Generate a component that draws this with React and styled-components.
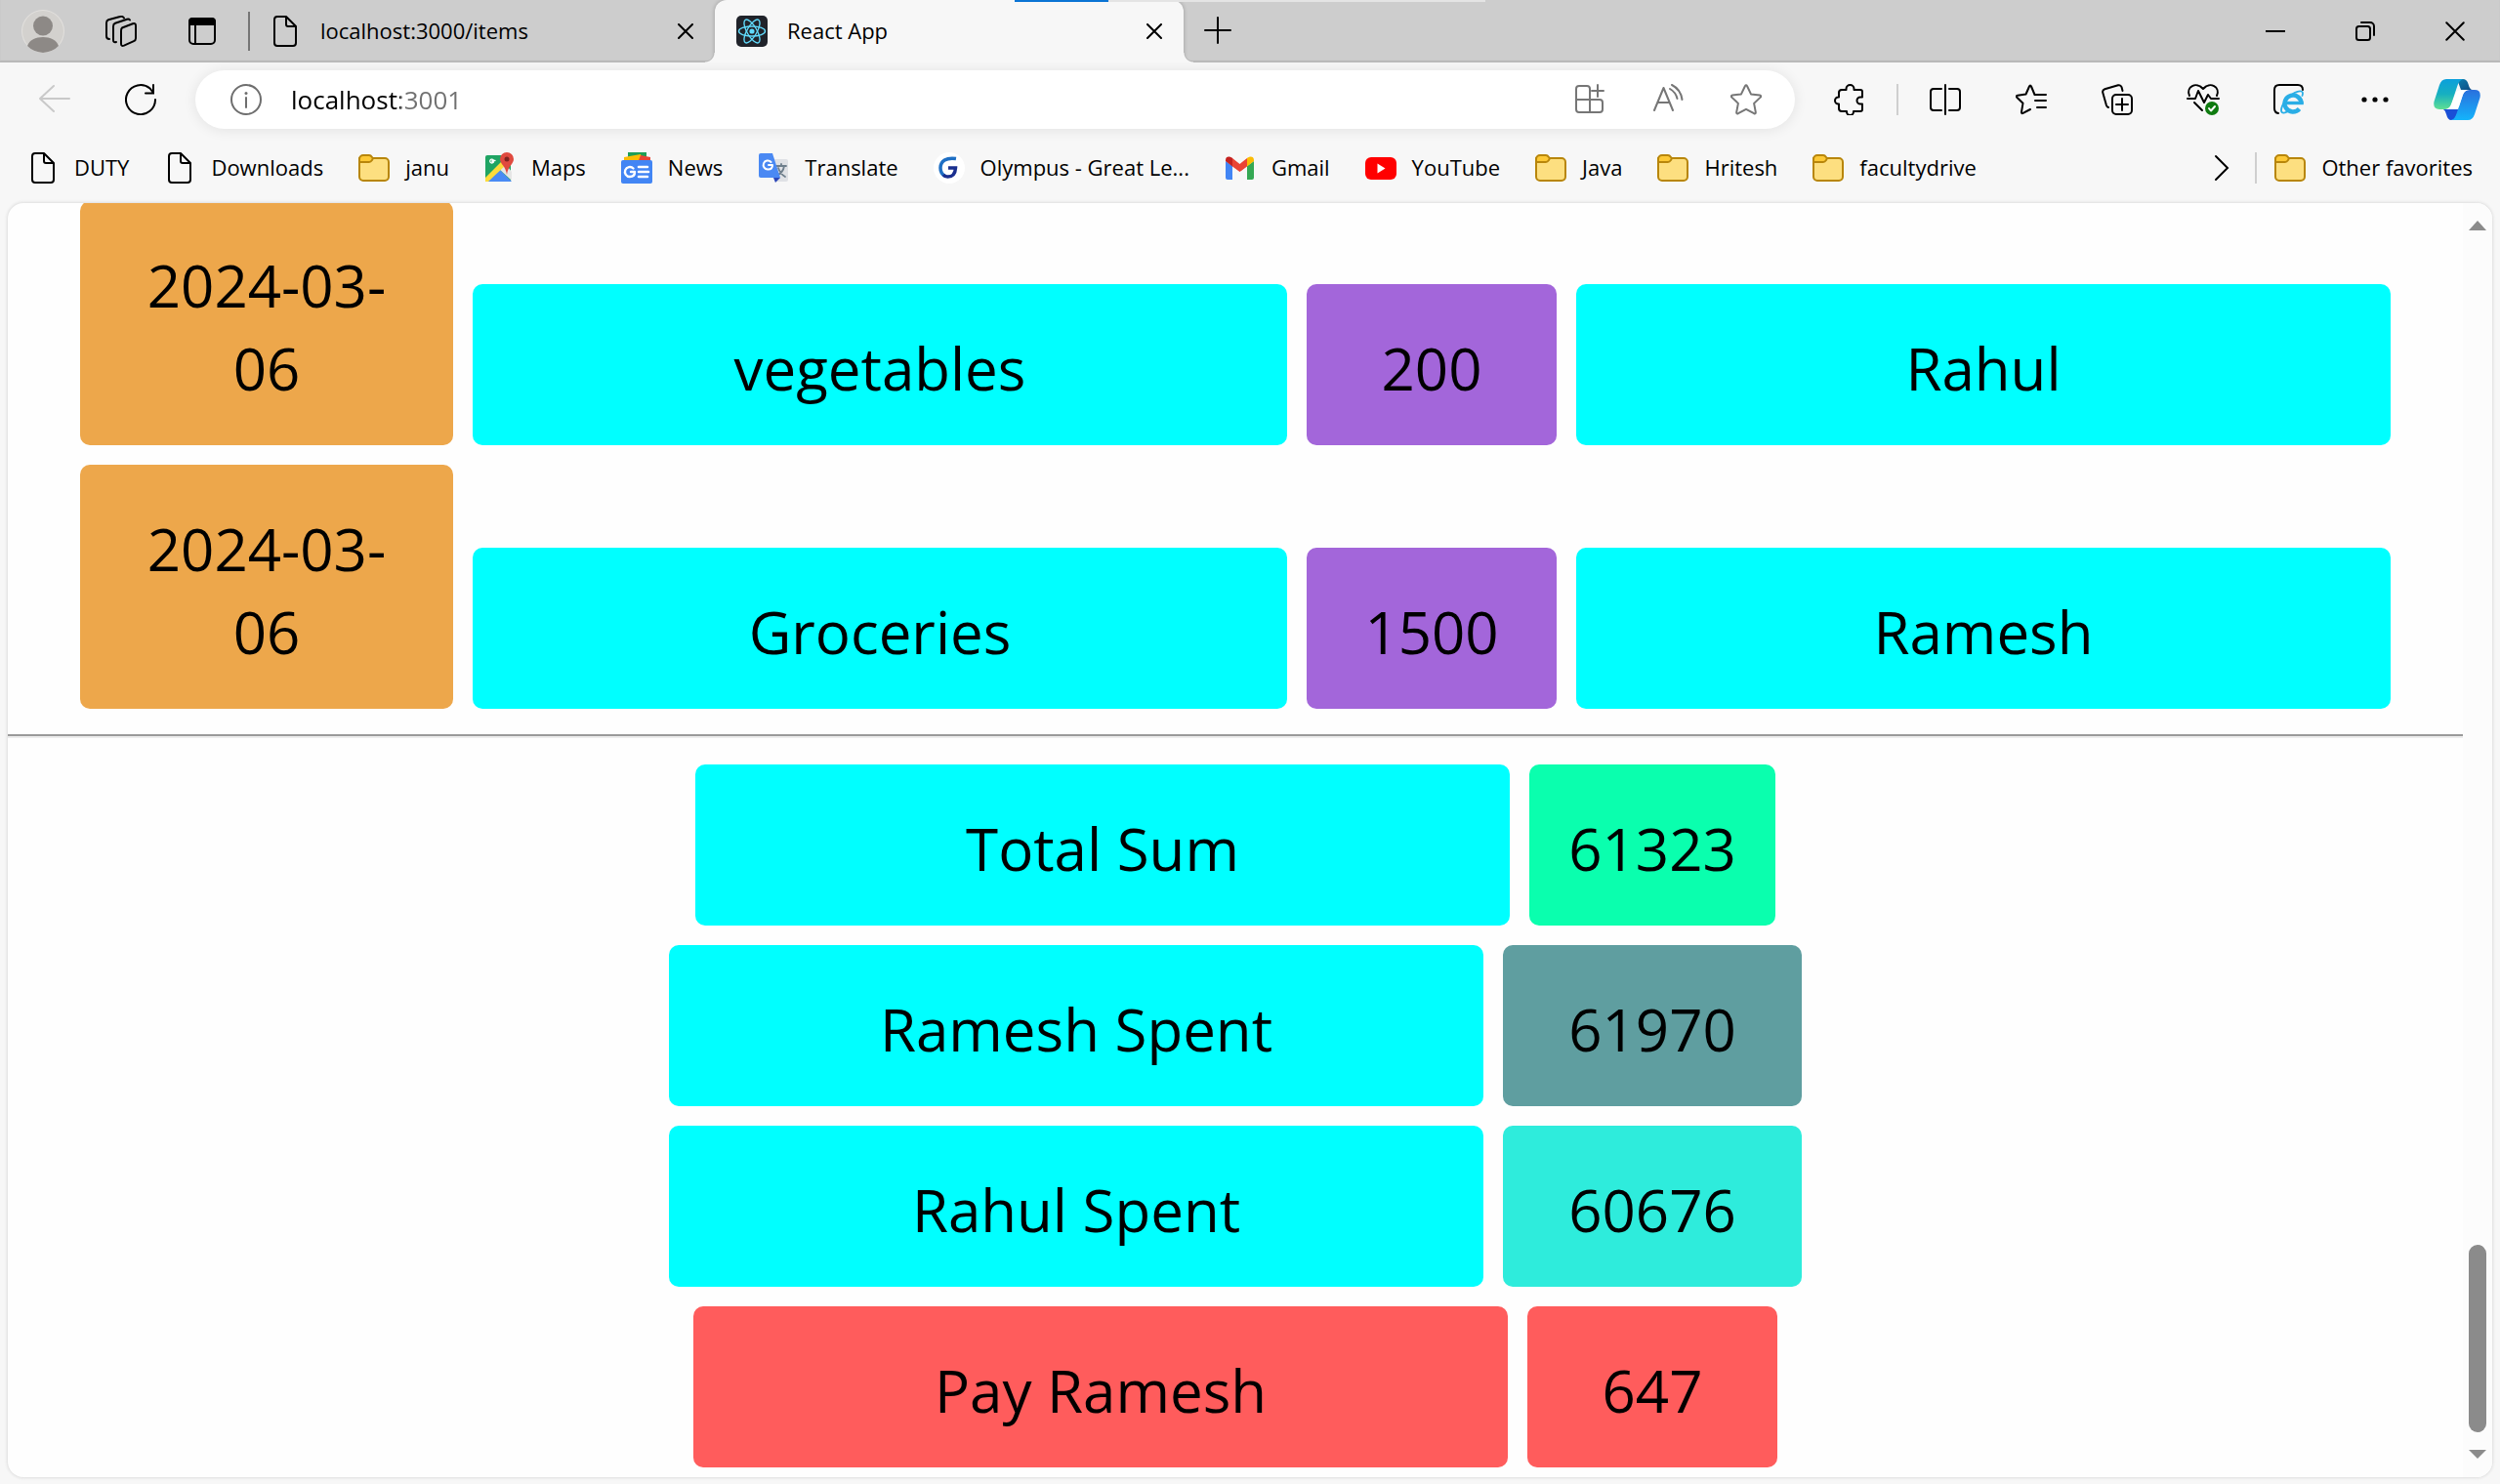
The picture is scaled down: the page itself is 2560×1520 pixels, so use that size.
import React from "react";
import styled, { createGlobalStyle } from "styled-components";

const Global = createGlobalStyle`
  * { box-sizing: border-box; }
  body { margin: 0; background: #f7f7f7; font-family: "Open Sans", "Noto Sans", sans-serif; color: #000; }
  button { border: 0; padding: 0; background: none; color: inherit; font: inherit; }
  svg { display: block; flex: none; }
`;

/* ---------- window frame ---------- */
const Browser = styled.div`
  display: flex;
  flex-direction: column;
  height: 100vh;
  min-height: 800px;
`;

const TabStrip = styled.header`
  display: flex;
  height: 64px;
  flex: none;
  background: #cdcdcd;
  box-shadow: inset 0 -2px 1px #b9b9b9;
  position: relative;
`;

const IconButton = styled.button`
  display: flex;
  align-items: center;
  justify-content: center;
  flex: none;
  width: ${(p) => p.$width || 88}px;
  height: ${(p) => p.$height || 60}px;
  color: ${(p) => p.$color || "#000"};
`;

const StripDivider = styled.span`
  align-self: center;
  width: 2px;
  height: 40px;
  background: #767676;
`;

const Tab = styled.div`
  display: flex;
  align-items: center;
  gap: 20px;
  flex: 0 1 ${(p) => (p.$active ? 480 : 476)}px;
  padding: 0 14px 0 ${(p) => (p.$active ? 22 : 20)}px;
  position: relative;
  background: ${(p) => (p.$active ? "#f7f7f7" : "transparent")};
  border-radius: 12px 12px 0 0;
  ${(p) =>
    p.$active &&
    `
    box-shadow: 0 0 4px rgba(0, 0, 0, 0.25);
    clip-path: inset(0 -12px 0 -12px);
    &::before, &::after {
      content: "";
      position: absolute;
      bottom: 0;
      width: 10px;
      height: 10px;
    }
    &::before { right: 100%; background: radial-gradient(circle at 0 0, transparent 8px, #b9b9b9 9px, #f7f7f7 10px); }
    &::after { left: 100%; background: radial-gradient(circle at 100% 0, transparent 8px, #b9b9b9 9px, #f7f7f7 10px); }
  `}
`;

const TabTitle = styled.span`
  flex: 1;
  padding-bottom: 2px;
  font-size: 22px;
  line-height: 32px;
  white-space: nowrap;
`;

const Spacer = styled.div`
  flex: 1;
`;

const LoadTrack = styled.div`
  position: absolute;
  top: 0;
  left: 1039px;
  width: 482px;
  height: 2px;
  background: linear-gradient(90deg, #0a74d4 96px, #e4e4e4 96px);
`;

/* ---------- toolbar ---------- */
const Toolbar = styled.div`
  display: flex;
  align-items: center;
  flex: none;
  padding: 8px 4px 8px 12px;
`;

const AddressBar = styled.form`
  display: flex;
  align-items: center;
  flex: 1;
  height: 60px;
  margin: 0 12px;
  padding: 0 10px 0 36px;
  border-radius: 30px;
  background: #fff;
  box-shadow: 0 1px 14px rgba(0, 0, 0, 0.09);
`;

const AddressInput = styled.input`
  flex: 1;
  min-width: 0;
  margin-left: 28px;
  padding: 0 2px;
  border: 0;
  outline: 0;
  font: 26px/40px "Open Sans", "Noto Sans", sans-serif;
  color: transparent;
  background: linear-gradient(90deg, #000 114px, #707070 114px);
  -webkit-background-clip: text;
  background-clip: text;
`;

const Divider = styled.span`
  width: 2px;
  height: 32px;
  margin: 0 ${(p) => p.$gap}px;
  background: #cfcfcf;
`;

/* ---------- favorites ---------- */
const Favorites = styled.nav`
  display: flex;
  align-items: center;
  gap: 36px;
  height: 64px;
  flex: none;
  margin-bottom: 4px;
  padding: 0 28px;
`;

const Favorite = styled.a`
  display: flex;
  align-items: center;
  gap: 16px;
  font-size: 22px;
  line-height: 32px;
  color: #000;
  text-decoration: none;
  white-space: nowrap;
`;

const FavoriteName = styled.span`
  padding-bottom: 2px;
`;

const FavoritesEnd = styled.div`
  display: flex;
  align-items: center;
  margin-left: auto;
`;

/* ---------- page view ---------- */
const View = styled.main`
  display: flex;
  flex: 1;
  min-height: 0;
  margin: 0 8px 7px;
  border-radius: 16px;
  background: #fefefe;
  box-shadow: 0 0 3px 1px #dedede;
  overflow: hidden;
`;

const Page = styled.div`
  display: flex;
  flex-direction: column;
  justify-content: flex-end;
  flex: 1;
  min-width: 0;
  padding-bottom: 10px;
`;

const Rows = styled.ul`
  display: flex;
  flex-direction: column;
  gap: 20px;
  margin: 0;
  padding: 0;
  list-style: none;
`;

const Row = styled.li`
  display: flex;
  justify-content: center;
  align-items: flex-end;
  gap: 20px;
`;

const Tile = styled.div`
  flex: 0 1 ${(p) => p.$width}px;
  padding: 44px 38px 36px;
  border-radius: 10px;
  background: ${(p) => p.$tone};
  font-size: 60px;
  line-height: 85px;
  text-align: center;
`;

const Rule = styled.hr`
  flex: none;
  width: 100%;
  margin: 26px 0 27px;
  border: 0;
  border-top: 2px solid #9a9a9a;
  border-bottom: 2px solid #ededed;
`;

const ScrollBar = styled.div`
  display: flex;
  flex-direction: column;
  align-items: center;
  gap: 18px;
  flex: none;
  width: 30px;
  padding: 18px 0;
  background: #fcfcfc;
`;

const Track = styled.div`
  display: flex;
  align-items: flex-end;
  flex: 1;
`;

const Thumb = styled.div`
  width: 18px;
  height: 192px;
  border-radius: 9px;
  background: #8b8b8b;
`;

/* ---------- icons ---------- */
const Ico = ({ size = 32, sw = 2, children, vb = "0 0 32 32", ...rest }) => (
  <svg width={size} height={size} viewBox={vb} fill="none" stroke="currentColor" strokeWidth={sw} strokeLinecap="round" strokeLinejoin="round" aria-hidden="true" {...rest}>
    {children}
  </svg>
);

const DocIcon = () => (
  <Ico>
    <path d="M8 1h9l10 10v17a3 3 0 0 1-3 3H8a3 3 0 0 1-3-3V4a3 3 0 0 1 3-3zM17 1v8a2 2 0 0 0 2 2h8" />
  </Ico>
);

const FolderIcon = () => (
  <Ico stroke="#b8860b">
    <path d="M1 6h26a4 4 0 0 1 4 4v15a4 4 0 0 1-4 4H5a4 4 0 0 1-4-4z" fill="#fddf80" />
    <path d="M5 3h6c1.500 0 2 .5 3 2s1 1.500 0 3-1.500 2-3 2H1V7a4 4 0 0 1 4-4z" fill="#fdc936" />
  </Ico>
);

const AvatarIcon = () => (
  <Ico size={44} vb="0 0 44 44" stroke="none">
    <circle cx="22" cy="22" r="22" fill="#e2e0dd" />
    <circle cx="22" cy="22" r="21" fill="#d3d1ce" />
    <circle cx="22" cy="16.500" r="10" fill="#8d8986" />
    <path d="M6 37c2-6 8.500-9 16-9s14 3 16 9a22 22 0 0 1-32 0z" fill="#8d8986" />
  </Ico>
);

const WorkspacesIcon = () => (
  <Ico>
    <path d="M17 12.500l11-4.200q3-1 3 2v13q0 2-2 2.800l-10 4.500q-3 1.200-3-1.800v-13q0-2.400 1-3.300z" />
    <path d="M11 27q-3 1-3-2V11q0-2.500 2-3.300l12-4q2-.6 3 .8" />
    <path d="M4 24q-3 0-3-3V7.500q0-2.500 2-3.300L15 1q2.500-.8 4 1.500" />
  </Ico>
);

const TabActionsIcon = () => (
  <Ico>
    <rect x="3" y="3" width="26" height="26" rx="4" />
    <path d="M9 9v19" />
    <path d="M2 10V6a4 4 0 0 1 4-4h20a4 4 0 0 1 4 4v4z" fill="currentColor" stroke="none" />
  </Ico>
);

const ReactIcon = () => (
  <Ico stroke="#61dafb" sw={1.4}>
    <rect width="32" height="32" rx="5" fill="#20232a" stroke="none" />
    <circle cx="16" cy="16" r="2.600" fill="#61dafb" stroke="none" />
    {[0, 60, 120].map((a) => (
      <ellipse key={a} cx="16" cy="16" rx="13.500" ry="5" transform={`rotate(${a} 16 16)`} />
    ))}
  </Ico>
);

const CrossIcon = ({ size = 16, sw = 2 }) => (
  <Ico size={size} vb="0 0 16 16" sw={sw}>
    <path d="M1 1l14 14M15 1L1 15" />
  </Ico>
);

const PlusIcon = () => (
  <Ico size={28} vb="0 0 28 28" sw={2}>
    <path d="M14 1v26M1 14h26" />
  </Ico>
);

const MinimizeIcon = () => (
  <Ico size={20} vb="0 0 20 20" strokeLinecap="butt">
    <path d="M0 10h20" />
  </Ico>
);

const RestoreIcon = () => (
  <Ico size={20} vb="0 0 20 20">
    <rect x="1" y="5" width="14" height="14" rx="2.500" />
    <path d="M6 1h9a4 4 0 0 1 4 4v9" />
  </Ico>
);

const BackIcon = () => (
  <Ico>
    <path d="M1 15h30M15 2L1 15l14 13" />
  </Ico>
);

const RefreshIcon = () => (
  <Ico strokeLinejoin="miter">
    <path d="M31 16A15 15 0 1 1 25.500 4.500L29 9M29 1v8.500h-8" />
  </Ico>
);

const InfoIcon = () => (
  <Ico stroke="#6e6e6e">
    <circle cx="16" cy="16" r="15" />
    <path d="M16 14v10" />
    <circle cx="16" cy="9.500" r="1.500" fill="#6e6e6e" stroke="none" />
  </Ico>
);

const AppsIcon = () => (
  <Ico>
    <path d="M16 16V5a3 3 0 0 0-3-3H5a3 3 0 0 0-3 3v21a3 3 0 0 0 3 3h21a3 3 0 0 0 3-3v-7a3 3 0 0 0-3-3H2M16 16v13M24 1v12M18 7h12" />
  </Ico>
);

const ReadAloudIcon = () => (
  <Ico>
    <path d="M2 27L11.500 4 21 27M5.500 19h12M18 5q6 3.500 7.500 10M20 1q9 4.500 10.500 15" />
  </Ico>
);

const StarIcon = () => (
  <Ico>
    <path d="M14.900 2.200q1.100-1.800 2.200 0l3.900 8.200 9 1.200q2 .4.700 2l-6.600 6.300 1.700 9q.2 2-1.700 1.300L16 25.900l-8.100 4.300q-1.900.7-1.700-1.300l1.700-9-6.600-6.300q-1.300-1.600.7-2l9-1.200z" />
  </Ico>
);

const PuzzleIcon = () => (
  <Ico>
    <path d="M5 9q0-3 3-3h4.500v-1a4 4 0 0 1 8 0v1H27q2 0 2 2v5.500h-2a3.500 3.500 0 0 0 0 7h2V26q0 2-2 2h-7v.5a3.500 3.500 0 0 1-7 0V28H8q-3 0-3-3v-4.500H4.500a3.500 3.500 0 0 1 0-7H5z" />
  </Ico>
);

const SplitIcon = () => (
  <Ico>
    <path d="M16 1v30M12 5H4a3 3 0 0 0-3 3v16a3 3 0 0 0 3 3h8M20 5h8a3 3 0 0 1 3 3v16a3 3 0 0 1-3 3h-8" />
  </Ico>
);

const FavListIcon = () => (
  <Ico>
    <path d="M21 11h-1.500L16 2.500q-1-2-2 0l-3.500 8-8.500 1.200q-2 .4-.7 2l6.200 6-1.500 9q-.2 2 1.600 1.200L15 26M20 11h11M20 17h11M22 24h9" />
  </Ico>
);

const CollectionsIcon = () => (
  <Ico>
    <rect x="11" y="11" width="20" height="20" rx="4" />
    <path d="M21 15v12M15 21h12M7 24q-1.500-.5-2-2L1.300 9q-.8-2.800 2-3.800L17 1.300q2.500-.6 3.500 1.800L21.500 7" />
  </Ico>
);

const HeartIcon = () => (
  <Ico size={36} vb="0 0 36 36">
    <path d="M4 14C0 5 11-1 18 7c7-8 18-2 14 7M2 17h8l3-8 6 12 4-8 3 4h8M9 21l8 8" />
    <circle cx="27" cy="27" r="7" fill="#0f7b10" stroke="none" />
    <path d="M24 27l2 2.500 4-4.500" stroke="#fff" />
  </Ico>
);

const IeIcon = () => (
  <Ico>
    <path d="M5 30q-4-.5-4-5V6q0-5 5-5h19q5 0 5 5" />
    <path d="M28.500 20.500a8.500 8.500 0 1 0-2 5" stroke="#2aaee6" strokeWidth="4.400" strokeLinecap="butt" />
    <path d="M13 19.500h17.700" stroke="#2aaee6" strokeWidth="3.400" strokeLinecap="butt" />
    <path d="M29.500 12c2-5-2-6-8-3C14 13 8 22 8 27c0 3 3 3.500 7 1" stroke="#2aaee6" strokeWidth="1.800" />
  </Ico>
);

const DotsIcon = () => (
  <Ico stroke="none">
    <circle cx="5" cy="16" r="2.600" fill="currentColor" />
    <circle cx="16" cy="16" r="2.600" fill="currentColor" />
    <circle cx="27" cy="16" r="2.600" fill="currentColor" />
  </Ico>
);

const CopilotIcon = () => (
  <Ico size={48} vb="0 0 48 48" stroke="none">
    <defs>
      <linearGradient id="cpA" x1="0" y1="0" x2="0" y2="1">
        <stop offset="0" stopColor="#0b9fdc" />
        <stop offset="0.5" stopColor="#17b0c0" />
        <stop offset="1" stopColor="#5fdf93" />
      </linearGradient>
      <linearGradient id="cpB" x1="0" y1="0" x2="0" y2="1">
        <stop offset="0" stopColor="#2a6fdd" />
        <stop offset="1" stopColor="#14b4fb" />
      </linearGradient>
      <linearGradient id="cpC" x1="0" y1="0" x2="1" y2="1">
        <stop offset="0" stopColor="#0d7fb0" />
        <stop offset="1" stopColor="#0f4a80" />
      </linearGradient>
    </defs>
    <path d="M24 3h6q4 0 5.500 5 1.500 6 4.500 6H28z" fill="url(#cpC)" />
    <path d="M10 34h16l-4 10q-1.500 1-4 1-3.500 0-5-6-1-4-3-5z" fill="#1a4fd6" />
    <path d="M13 3h17q-4 1-6 8l-6 18q-2 5-7 5H6q-7 0-5.500-8L6 9q2-6 7-6z" fill="url(#cpA)" />
    <path d="M35 45H18q4-1 6-8l6-18q2-5 7-5h5q7 0 5.500 8L42 39q-2 6-7 6z" fill="url(#cpB)" />
    <path d="M30 14h7q-5 0-7 5l-4 12q-1.500 3-4 3h-9q4-1 5-5l5-12q1-3 7-3z" fill="#fff" />
  </Ico>
);

const MapsIcon = () => (
  <Ico stroke="none">
    <rect x="1" y="3" width="26" height="27" rx="2" fill="#1fa463" />
    <path d="M2 30l13-13 13 13z" fill="#4a8af4" />
    <path d="M15 17l6-6 7 9v9z" fill="#e6e6e6" />
    <path d="M1 26L21 6l2 6L4 30H1z" fill="#fddc3b" />
    <path d="M11 8.500H8v1.500h1.500A2 2 0 1 1 9 7.500" stroke="#fff" strokeWidth="1.300" />
    <path d="M23 0a7 7 0 0 1 7 7c0 5-6 7-7 16-1-9-7-11-7-16a7 7 0 0 1 7-7z" fill="#e04a3f" />
    <circle cx="23" cy="7" r="2.500" fill="#7d2420" />
  </Ico>
);

const NewsIcon = () => (
  <Ico stroke="none">
    <path d="M7 0h19v6H7z" fill="#1e9e56" />
    <path d="M3 5l17-3 2 6H3z" fill="#fbbc04" />
    <path d="M20 3l10 2v3H18z" fill="#ea4335" />
    <rect y="8" width="32" height="24" rx="2" fill="#4285f4" />
    <path d="M10 20h4q0 5-5 5a5 5 0 1 1 3.500-8.500" stroke="#fff" strokeWidth="2.400" />
    <path d="M18 15h9M18 20h10M18 25h9" stroke="#fff" strokeWidth="2.600" />
  </Ico>
);

const TranslateIcon = () => (
  <Ico stroke="none">
    <path d="M13 7h16q2 0 2 2v19q0 2-2 2H19z" fill="#dfe1e5" />
    <path d="M18 14h11M24 12v2M27 14q-1 7-8 10M21 16q2 6 7 9" stroke="#6f7f8c" strokeWidth="1.800" />
    <path d="M16 26h7l-5 5z" fill="#2a46b8" />
    <path d="M3 1h12l8 25H3q-2 0-2-2V3q0-2 2-2z" fill="#4a89f3" />
    <path d="M11 13h4q0 4.500-4.500 4.500a4.500 4.500 0 1 1 3-7.500" stroke="#fff" strokeWidth="2" />
  </Ico>
);

const OlympusIcon = () => (
  <Ico stroke="none">
    <circle cx="16" cy="16" r="16" fill="#fff" />
    <path d="M23 6.500C13 5 7 9 7 16q0 6 5 8.500" stroke="#1e6fc4" strokeWidth="3.500" strokeLinecap="butt" />
    <path d="M15 16h7.500q-.5 9-8 9-3 0-4.500-2" stroke="#1a2f8f" strokeWidth="3.500" strokeLinecap="butt" strokeLinejoin="miter" />
  </Ico>
);

const GmailIcon = () => (
  <Ico stroke="none">
    <path d="M1 9l7 5v14H3q-2 0-2-2z" fill="#4285f4" />
    <path d="M30 9l-7 5v14h5q2 0 2-2z" fill="#34a853" />
    <path d="M8 6l7.500 6L23 6v8.500L15.500 20 8 14.500z" fill="#ea4335" />
    <path d="M1 8c0-4 4-4.500 7-2v8.500L1 9z" fill="#c5221f" />
    <path d="M30 8c0-4-4-4.500-7-2v8.500L30 9z" fill="#fbbc04" />
  </Ico>
);

const YouTubeIcon = () => (
  <Ico stroke="none">
    <rect y="5" width="32" height="23" rx="6" fill="#f00" />
    <path d="M12.500 11.500v10l8-5z" fill="#fff" />
  </Ico>
);

const ChevronIcon = () => (
  <Ico>
    <path d="M10 4l12 12-12 12" strokeLinejoin="miter" />
  </Ico>
);

const ArrowHead = ({ down }) => (
  <svg width="18" height="10" viewBox="0 0 18 10" aria-hidden="true">
    <path d={down ? "M0 0h18L9 9z" : "M0 10h18L9 0z"} fill="#8b8b8b" />
  </svg>
);

/* ---------- data ---------- */
const favorites = [
  ["DUTY", DocIcon],
  ["Downloads", DocIcon],
  ["janu", FolderIcon],
  ["Maps", MapsIcon],
  ["News", NewsIcon],
  ["Translate", TranslateIcon],
  ["Olympus - Great Le...", OlympusIcon],
  ["Gmail", GmailIcon],
  ["YouTube", YouTubeIcon],
  ["Java", FolderIcon],
  ["Hritesh", FolderIcon],
  ["facultydrive", FolderIcon],
];

const tools = [
  ["Split screen", SplitIcon],
  ["Favorites", FavListIcon],
  ["Collections", CollectionsIcon],
  ["Browser essentials", HeartIcon],
  ["Internet Explorer mode", IeIcon],
  ["Settings and more", DotsIcon],
];

const entries = [
  { date: "2024-03-06", item: "vegetables", amount: 200, who: "Rahul" },
  { date: "2024-03-06", item: "Groceries", amount: 1500, who: "Ramesh" },
];

const totals = [
  { label: "Total Sum", value: 61323, width: 252, tone: "#0affae" },
  { label: "Ramesh Spent", value: 61970, width: 306, tone: "#5f9ea0" },
  { label: "Rahul Spent", value: 60676, width: 306, tone: "#2eecdc" },
  { label: "Pay Ramesh", value: 647, width: 256, tone: "#ff5c5c", labelTone: "#ff5c5c" },
];

export default function App() {
  return (
    <Browser>
      <Global />
      <TabStrip>
        <IconButton $height={64} aria-label="Profile"><AvatarIcon /></IconButton>
        <IconButton $height={64} $width={72} aria-label="Workspaces"><WorkspacesIcon /></IconButton>
        <IconButton $height={64} $width={94} aria-label="Tab actions"><TabActionsIcon /></IconButton>
        <StripDivider />
        <Tab>
          <DocIcon />
          <TabTitle>localhost:3000/items</TabTitle>
          <IconButton $width={32} $height={32} aria-label="Close tab"><CrossIcon /></IconButton>
        </Tab>
        <Tab $active>
          <ReactIcon />
          <TabTitle>React App</TabTitle>
          <IconButton $width={32} $height={32} aria-label="Close tab"><CrossIcon /></IconButton>
        </Tab>
        <IconButton $width={70} $height={62} aria-label="New tab"><PlusIcon /></IconButton>
        <Spacer />
        <IconButton $width={92} $height={64} aria-label="Minimize"><MinimizeIcon /></IconButton>
        <IconButton $width={92} $height={64} aria-label="Restore"><RestoreIcon /></IconButton>
        <IconButton $width={92} $height={64} aria-label="Close"><CrossIcon size={20} sw={1.6} /></IconButton>
        <LoadTrack />
      </TabStrip>

      <Toolbar>
        <IconButton $color="#c9c9c9" aria-label="Back"><BackIcon /></IconButton>
        <IconButton aria-label="Refresh"><RefreshIcon /></IconButton>
        <AddressBar onSubmit={(e) => e.preventDefault()}>
          <InfoIcon />
          <AddressInput aria-label="Address" defaultValue="localhost:3001" />
          <IconButton type="button" $width={80} $color="#767676" aria-label="Install app"><AppsIcon /></IconButton>
          <IconButton type="button" $width={80} $color="#767676" aria-label="Read aloud"><ReadAloudIcon /></IconButton>
          <IconButton type="button" $width={80} $color="#767676" aria-label="Add to favorites"><StarIcon /></IconButton>
        </AddressBar>
        <IconButton aria-label="Extensions"><PuzzleIcon /></IconButton>
        <Divider $gap={4} />
        {tools.map(([name, Icon]) => (
          <IconButton key={name} aria-label={name}><Icon /></IconButton>
        ))}
        <IconButton $width={80} aria-label="Copilot"><CopilotIcon /></IconButton>
      </Toolbar>

      <Favorites>
        {favorites.map(([name, Icon]) => (
          <Favorite key={name} href="#"><Icon /><FavoriteName>{name}</FavoriteName></Favorite>
        ))}
        <FavoritesEnd>
          <IconButton $width={32} aria-label="More favorites"><ChevronIcon /></IconButton>
          <Divider $gap={18} />
          <Favorite href="#"><FolderIcon /><FavoriteName>Other favorites</FavoriteName></Favorite>
        </FavoritesEnd>
      </Favorites>

      <View>
        <Page>
          <Rows>
            {entries.map((e) => (
              <Row key={e.item}>
                <Tile $width={382} $tone="#eda74b">{e.date}</Tile>
                <Tile $width={834} $tone="#00ffff">{e.item}</Tile>
                <Tile $width={256} $tone="#a366da">{e.amount}</Tile>
                <Tile $width={834} $tone="#00ffff">{e.who}</Tile>
              </Row>
            ))}
          </Rows>
          <Rule />
          <Rows>
            {totals.map((t) => (
              <Row key={t.label}>
                <Tile $width={834} $tone={t.labelTone || "#00ffff"}>{t.label}</Tile>
                <Tile $width={t.width} $tone={t.tone}>{t.value}</Tile>
              </Row>
            ))}
          </Rows>
        </Page>
        <ScrollBar>
          <ArrowHead />
          <Track><Thumb /></Track>
          <ArrowHead down />
        </ScrollBar>
      </View>
    </Browser>
  );
}
